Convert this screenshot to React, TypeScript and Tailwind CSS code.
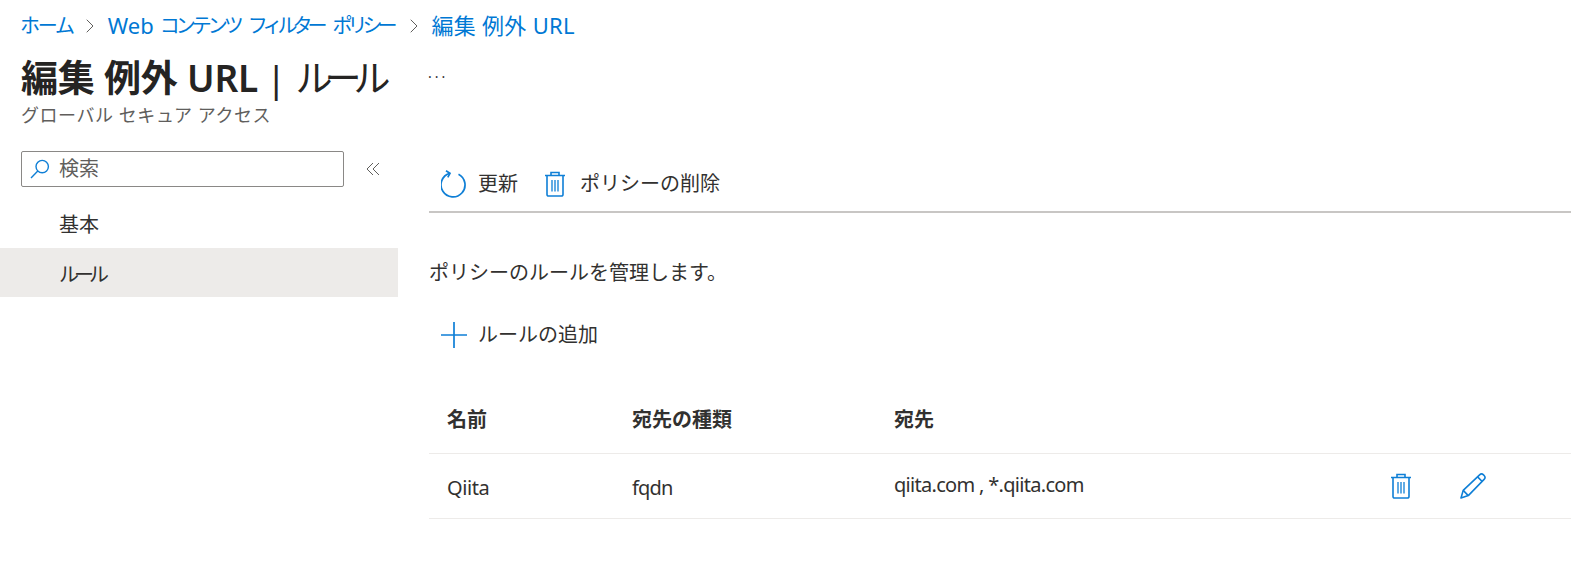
import React from 'react';
import { ChevronRight } from 'lucide-react';

const font = 'font-["Noto_Sans","Noto_Sans_CJK_JP",sans-serif]';

const TrashIcon = ({ className }: { className?: string }) => (
  <svg viewBox="0 0 22 26" fill="none" stroke="#0f7fd6" strokeWidth="1.6" className={className}>
    <path d="M1 4.5h20M7 4.5V1.5h8v3M3 4.5v19a1.5 1.5 0 0 0 1.5 1.5h13a1.5 1.5 0 0 0 1.5-1.5v-19" />
    <path d="M8 9v11.5M11 9v11.5M14 9v11.5" strokeWidth="1.3" />
  </svg>
);

const PencilIcon = ({ className }: { className?: string }) => (
  <svg viewBox="0 0 26 26" fill="none" stroke="#0f7fd6" strokeWidth="1.6" strokeLinejoin="round" className={className}>
    <path d="M1 25l2.2-7.6L19.6 1.9a2.8 2.8 0 0 1 3.9 0l.6.6a2.8 2.8 0 0 1 0 3.9L8.3 22.6 1 25z" />
    <path d="M3.2 17.4l5.1 5.2M17.6 3.9l4.6 4.6" />
  </svg>
);

const RefreshIcon = () => (
  <svg viewBox="0 0 26 28" fill="none" stroke="#0f7fd6" strokeWidth="1.7" className="h-[28px] w-[26px]">
    <path d="M17.5 4.2A12 12 0 1 1 8.5 3.4" />
    <path d="M5 0.8l4 2.6-2.2 4" />
  </svg>
);

const SearchIcon = () => (
  <svg viewBox="0 0 20 20" fill="none" stroke="#0f7fd6" strokeWidth="1.4" className="h-[20px] w-[20px]">
    <circle cx="12.2" cy="7.6" r="6.2" />
    <path d="M7.8 12L1 19" />
  </svg>
);

const CollapseIcon = () => (
  <svg viewBox="0 0 14 14" fill="none" stroke="#605e5c" strokeWidth="1" className="ml-[22px] h-[14px] w-[14px]">
    <path d="M7 1L1 7l6 6M13 1L7 7l6 6" />
  </svg>
);

export default function App() {
  return (
    <div className={`${font} h-[563px] w-[1571px] overflow-hidden bg-white text-[#323130]`}>
      <nav className="flex h-[53px] items-center pb-[2px] pl-[20px] text-[20px] text-[#0078d4]">
        <span className="tracking-[-2.2px]">ホーム</span>
        <ChevronRight className="ml-[5px] mr-[6px] h-[24px] w-[24px] text-[#605e5c]" strokeWidth={1} />
        <span className="text-[22px]">Web</span>
        <span className="ml-[6px] tracking-[-4px]">コンテンツ</span>
        <span className="ml-[8px] tracking-[-5px]">フィルター</span>
        <span className="ml-[10px] tracking-[-5px]">ポリシー</span>
        <ChevronRight className="ml-[10px] mr-[5px] h-[24px] w-[24px] text-[#605e5c]" strokeWidth={1} />
        <span className="text-[22px] tracking-[0.3px]">編集 例外 URL</span>
      </nav>

      <header className="relative pl-[21px]">
        <h1 className="flex h-[50px] items-center text-[37px] leading-[50px] text-[#252423]">
          <span className="font-semibold tracking-[-0.2px]">編集 例外 URL</span>
          <span className="ml-[8px] font-normal">|</span>
          <span className="ml-[9px] font-normal tracking-[-8px]">ルール</span>
        </h1>
        <p className="text-[18px] leading-[24px] tracking-[0.55px] text-[#605e5c]">グローバル セキュア アクセス</p>
        <span className="absolute left-[428px] top-[8px] text-[14px] leading-[24px] tracking-[3px] text-[#323130]">...</span>
      </header>

      <div className="flex">
        <aside className="w-[398px] shrink-0 pt-[24px]">
          <div className="flex items-center pl-[21px]">
            <div className="flex h-[36px] w-[323px] items-center rounded-[2px] border border-[#8a8886] pl-[8px]">
              <SearchIcon />
              <span className="ml-[9px] text-[20px] text-[#605e5c]">検索</span>
            </div>
            <CollapseIcon />
          </div>
          <ul className="mt-[13px] text-[20px]">
            <li className="flex h-[48px] items-center pl-[59px] pt-[2px]">基本</li>
            <li className="flex h-[49px] items-center bg-[#edebe9] pl-[59px] pt-[5px] tracking-[-5px]">ルール</li>
          </ul>
        </aside>

        <main className="ml-[31px] flex-1">
          <div className="flex h-[86px] items-end border-b-2 border-[#c8c6c4] pb-[12px] text-[20px]">
            <button className="ml-[12px] flex items-center">
              <RefreshIcon />
              <span className="ml-[11px]">更新</span>
            </button>
            <button className="ml-[26px] flex items-center">
              <TrashIcon className="h-[26px] w-[22px]" />
              <span className="ml-[14px]">ポリシーの削除</span>
            </button>
          </div>

          <p className="mt-[45px] text-[20px] leading-[30px]">ポリシーのルールを管理します。</p>

          <button className="ml-[12px] mt-[32px] flex items-center text-[20px]">
            <svg viewBox="0 0 26 26" stroke="#0f7fd6" strokeWidth="1.7" className="h-[26px] w-[26px]">
              <path d="M13 0v26M0 13h26" />
            </svg>
            <span className="ml-[11px]">ルールの追加</span>
          </button>

          <table className="mt-[37px] w-full border-collapse text-left text-[20px]">
            <thead>
              <tr className="h-[66px] border-b border-[#edebe9]">
                <th className="w-[203px] pl-[18px] font-bold">名前</th>
                <th className="w-[261px] font-bold">宛先の種類</th>
                <th className="pl-[1px] font-bold">宛先</th>
                <th className="w-[181px]"></th>
              </tr>
            </thead>
            <tbody>
              <tr className="h-[65px] border-b border-[#edebe9]">
                <td className="pl-[18px] pt-[4px] tracking-[-0.4px]">Qiita</td>
                <td className="pt-[4px] tracking-[-0.8px]">fqdn</td>
                <td className="pb-[2px] pl-[1px] tracking-[-0.7px]">qiita.com , *.qiita.com</td>
                <td>
                  <div className="flex items-center">
                    <TrashIcon className="h-[26px] w-[22px]" />
                    <PencilIcon className="ml-[48px] h-[26px] w-[26px]" />
                  </div>
                </td>
              </tr>
            </tbody>
          </table>
        </main>
      </div>
    </div>
  );
}
